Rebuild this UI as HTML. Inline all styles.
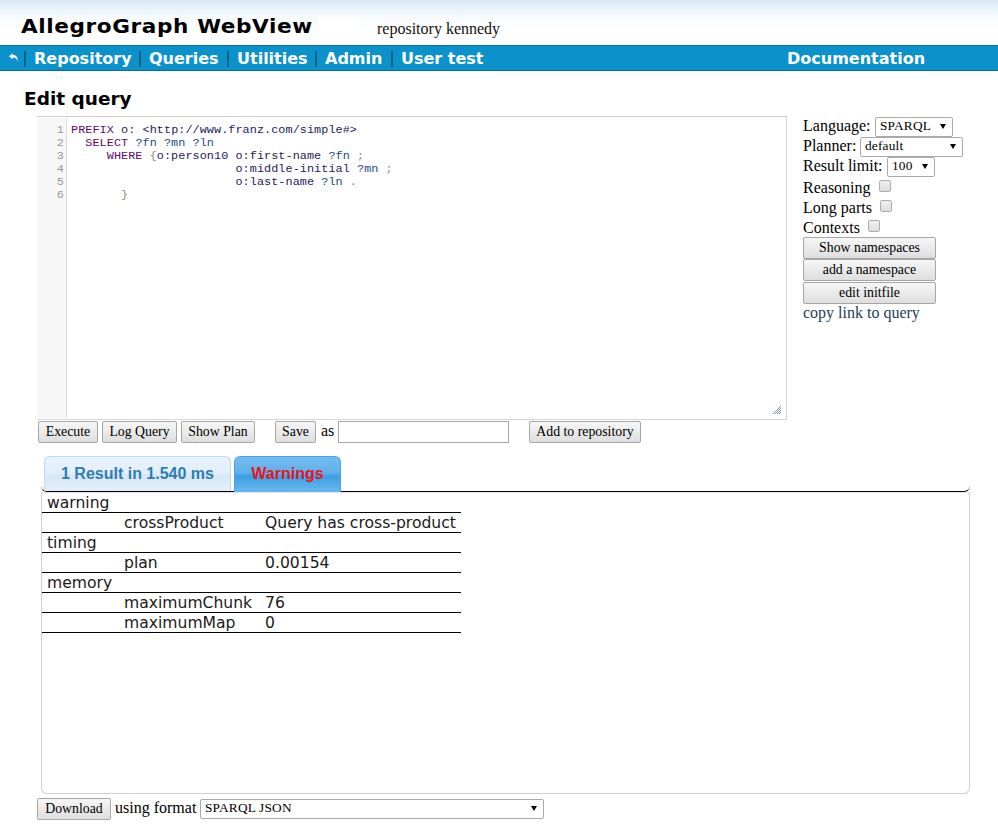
<!DOCTYPE html>
<html><head><meta charset="utf-8">
<style>
html,body{margin:0;padding:0;background:#fff;}
body{width:998px;height:838px;position:relative;overflow:hidden;font-family:"Liberation Serif",serif;font-size:16px;color:#000;}
#hdr{position:absolute;left:0;top:0;width:998px;height:45px;background:linear-gradient(#d3e8f3 0,#e1eff7 5px,#ecf5fa 10px,#f7fbfd 17px,#fdfeff 26px,#fff 32px);}
#title{position:absolute;left:21px;top:12px;font-family:"DejaVu Sans",sans-serif;font-weight:bold;font-size:20px;line-height:28px;white-space:nowrap;letter-spacing:0.55px;transform:scaleX(1.08);transform-origin:0 0}
#repo{position:absolute;left:377px;top:20px;font-size:16px;line-height:18px;white-space:nowrap;color:#111}
#nav{position:absolute;left:0;top:45px;width:998px;height:24px;background:#0c92cb;border-top:1px solid #0a6c98;border-bottom:1px solid #0a6c98;box-sizing:content-box;color:#fff;font-family:"DejaVu Sans",sans-serif;font-weight:bold;font-size:16px;line-height:24px;white-space:nowrap}
#nav span{position:absolute;top:1px}
#nav .sep{position:absolute;top:5px;width:2px;height:16px;background:#0a6286}
h2{position:absolute;left:24px;top:86px;margin:0;font-family:"DejaVu Sans",sans-serif;font-weight:bold;font-size:18.5px;line-height:26px;white-space:nowrap}
#ed{position:absolute;left:37px;top:116px;width:748px;height:302px;border:1px solid;border-color:#cdcdcd #dadada #d6d6d6 #fcfcfc;background:#fff}
#gut{position:absolute;left:0;top:1px;width:28px;height:300px;background:#f7f7f7;border-right:1px solid #dcdcdc}
.mono{font-family:"Liberation Mono",monospace;font-size:11.8px;line-height:13px;white-space:pre;letter-spacing:0.07px}
#ln{position:absolute;left:1px;top:7px;width:25px;text-align:right;color:#999}
#code{position:absolute;left:33px;top:7px;color:#333}
.k{color:#62086e}.v{color:#1c4c86}.a{color:#219}.b{color:#8c8c74}.u{color:#241a60}
.btn{position:absolute;box-sizing:border-box;height:22px;border:1px solid #a6a6a6;border-radius:2px;background:linear-gradient(#f6f6f6,#dedede);font-family:"Liberation Serif",serif;font-size:13.8px;line-height:20px;text-align:center;color:#000;white-space:nowrap}
.sel{position:absolute;box-sizing:border-box;border:1px solid #a9a9a9;background:#fff;font-size:13.33px;letter-spacing:0.2px;white-space:nowrap;border-radius:2px}
.sel i{position:absolute;right:6.5px;top:6px;width:0;height:0;border-left:3.5px solid transparent;border-right:3.5px solid transparent;border-top:5.5px solid #000;font-size:0}
.lbl{position:absolute;white-space:nowrap;font-size:16px;line-height:18px}
.cb{position:absolute;width:12px;height:12px;border:1px solid #adadad;border-radius:2px;background:linear-gradient(#efefef,#dedede);box-sizing:border-box}
.tab{position:absolute;box-sizing:border-box;font-family:"Liberation Sans",sans-serif;font-weight:bold;font-size:16px;text-align:center;white-space:nowrap}
#tnav{position:absolute;left:41px;top:452px;width:929px;height:40px;box-sizing:border-box;border-bottom:1px solid #000;border-radius:0 0 6px 6px}
#panel{position:absolute;left:41px;top:492px;width:929px;height:302px;box-sizing:border-box;border:1px solid #d0d0d0;border-top:1px solid #e4e4e4;border-radius:0 0 6px 6px}
#tbl{position:absolute;left:42px;top:493px;width:419px;font-family:"DejaVu Sans",sans-serif;font-size:15.6px;line-height:19px;color:#1a1a1a}
#tbl div{height:19px;border-bottom:1px solid #000;position:relative;white-space:nowrap}
#tbl span{position:absolute;top:1px}
</style></head><body>
<div id="hdr"></div>
<div style="position:absolute;left:318px;top:17px;width:42px;height:28px;background:#fff"></div>
<div id="title">AllegroGraph WebView</div>
<div id="repo">repository kennedy</div>
<div id="nav">
<svg style="position:absolute;left:7.5px;top:6.5px" width="11" height="9" viewBox="0 0 11 9"><path d="M1 3.2L4.6 0.2V2.1C8 2.1 10 4 9.6 8.4C9 5.6 7.6 4.4 4.6 4.4V6.3Z" fill="#fff"/></svg>
<b class="sep" style="left:24px"></b><span style="left:34px">Repository</span>
<b class="sep" style="left:139px"></b><span style="left:149px">Queries</span>
<b class="sep" style="left:227px"></b><span style="left:237px">Utilities</span>
<b class="sep" style="left:315px"></b><span style="left:325px">Admin</span>
<b class="sep" style="left:391px"></b><span style="left:401px">User test</span>
<span style="left:787px">Documentation</span>
</div>
<h2>Edit query</h2>
<div id="ed">
<div id="gut"></div>
<div id="ln" class="mono">1
2
3
4
5
6</div>
<div id="code" class="mono"><span class="k">PREFIX</span> <span class="u">o:</span> <span class="u">&lt;http://www.franz.com/simple#&gt;</span>
  <span class="k">SELECT</span> <span class="v">?fn ?mn ?ln</span>
     <span class="k">WHERE</span> <span class="b">{</span><span class="u">o:person10 o:first-name</span> <span class="v">?fn</span> <span class="b">;</span>
                       <span class="u">o:middle-initial</span> <span class="v">?mn</span> <span class="b">;</span>
                       <span class="u">o:last-name</span> <span class="v">?ln</span> <span class="b">.</span>
       <span class="b">}</span></div>
<svg style="position:absolute;right:5px;bottom:5px" width="8" height="8" viewBox="0 0 8 8" shape-rendering="crispEdges" fill="#8197b6"><rect x="7" y="0" width="1" height="1"/><rect x="6" y="1" width="1" height="1"/><rect x="5" y="2" width="1" height="1"/><rect x="7" y="2" width="1" height="1"/><rect x="4" y="3" width="1" height="1"/><rect x="6" y="3" width="1" height="1"/><rect x="3" y="4" width="1" height="1"/><rect x="5" y="4" width="1" height="1"/><rect x="7" y="4" width="1" height="1"/><rect x="2" y="5" width="1" height="1"/><rect x="4" y="5" width="1" height="1"/><rect x="6" y="5" width="1" height="1"/><rect x="1" y="6" width="1" height="1"/><rect x="3" y="6" width="1" height="1"/><rect x="5" y="6" width="1" height="1"/><rect x="7" y="6" width="1" height="1"/><rect x="0" y="7" width="1" height="1"/><rect x="2" y="7" width="1" height="1"/><rect x="4" y="7" width="1" height="1"/><rect x="6" y="7" width="1" height="1"/></svg>
</div>

<div class="lbl" style="left:803px;top:117px">Language:</div>
<div class="sel" style="left:875px;top:117px;width:78px;height:20px;line-height:16px;padding-left:4px">SPARQL<i>▼</i></div>
<div class="lbl" style="left:803px;top:137px">Planner:</div>
<div class="sel" style="left:860px;top:137px;width:103px;height:20px;line-height:16px;padding-left:4px">default<i>▼</i></div>
<div class="lbl" style="left:803px;top:157px">Result limit:</div>
<div class="sel" style="left:887px;top:157px;width:48px;height:20px;line-height:16px;padding-left:4px">100<i>▼</i></div>
<div class="lbl" style="left:803px;top:179px">Reasoning</div><div class="cb" style="left:879px;top:180px"></div>
<div class="lbl" style="left:803px;top:199px">Long parts</div><div class="cb" style="left:880px;top:200px"></div>
<div class="lbl" style="left:803px;top:219px">Contexts</div><div class="cb" style="left:868px;top:220px"></div>
<div class="btn" style="left:803px;top:237px;width:133px">Show namespaces</div>
<div class="btn" style="left:803px;top:259px;width:133px">add a namespace</div>
<div class="btn" style="left:803px;top:281px;width:133px;top:281.5px">edit initfile</div>
<div class="lbl" style="left:803px;top:304px;color:#1d3d5c">copy link to query</div>

<div class="btn" style="left:38px;top:421px;width:60px">Execute</div>
<div class="btn" style="left:102px;top:421px;width:75px">Log Query</div>
<div class="btn" style="left:181px;top:421px;width:74px">Show Plan</div>
<div class="btn" style="left:275px;top:421px;width:41px">Save</div>
<div class="lbl" style="left:321px;top:422px">as</div>
<div style="position:absolute;left:338px;top:421px;width:171px;height:22px;box-sizing:border-box;border:1px solid #a9a9a9;background:#fff"></div>
<div class="btn" style="left:529px;top:421px;width:112px">Add to repository</div>

<div id="tnav"></div>
<div class="tab" style="left:44px;top:456px;width:187px;height:35px;line-height:33px;border:1px solid #c0d9ec;border-bottom:none;border-radius:6px 6px 0 0;background:linear-gradient(#e9f3fb 0,#e1eefa 50%,#d5e6f5 52%,#e4f0fa 100%);color:#2e7db2">1 Result in 1.540 ms</div>
<div class="tab" style="left:234px;top:456px;width:107px;height:36px;line-height:33px;border:1px solid #4ba3e6;border-bottom:none;border-radius:6px 6px 0 0;background:linear-gradient(#74bbee 0,#5fb0ea 46%,#3c9ee1 54%,#6ab8ee 100%);color:#ea1320;z-index:3">Warnings</div>
<div id="panel"></div>
<div id="tbl">
<div><span style="left:5px">warning</span></div>
<div><span style="left:82px">crossProduct</span><span style="left:223px">Query has cross-product</span></div>
<div><span style="left:5px">timing</span></div>
<div><span style="left:82px">plan</span><span style="left:223px">0.00154</span></div>
<div><span style="left:5px">memory</span></div>
<div><span style="left:82px">maximumChunk</span><span style="left:223px">76</span></div>
<div><span style="left:82px">maximumMap</span><span style="left:223px">0</span></div>
</div>

<div class="btn" style="left:37px;top:798px;width:74px">Download</div>
<div class="lbl" style="left:115px;top:799px">using format</div>
<div class="sel" style="left:200px;top:799px;width:344px;height:20px;line-height:16px;padding-left:4px">SPARQL JSON<i>▼</i></div>
</body></html>
